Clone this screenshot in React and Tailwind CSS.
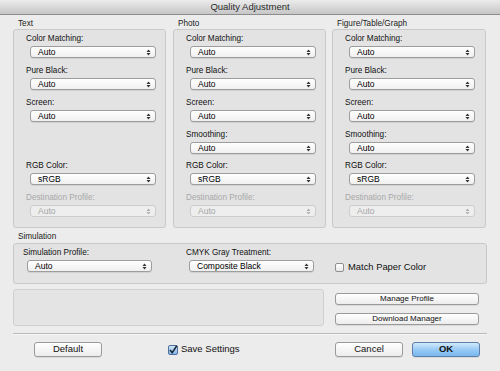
import { Fragment } from "react";

const Arrows = ({ disabled }) => (
  <svg width="5" height="7" viewBox="0 0 5 7" className="shrink-0">
    <path d="M0.5 3 L2.5 0.5 L4.5 3 Z" fill={disabled ? "#b0b0b0" : "#333"} />
    <path d="M0.5 4 L2.5 6.5 L4.5 4 Z" fill={disabled ? "#b0b0b0" : "#333"} />
  </svg>
);

const Select = ({ value, disabled, className = "" }) => (
  <div
    className={`h-[12px] flex items-center justify-between pl-[7px] pr-[4px] rounded-[3px] border text-[8.5px] leading-none ${
      disabled
        ? "border-[#cdcdcd] bg-[#eeeeee] text-[#a5a5a5]"
        : "border-[#9d9d9d] bg-gradient-to-b from-white to-[#f0f0f0] text-black shadow-[0_1px_0_rgba(0,0,0,0.08)]"
    } ${className}`}
  >
    <span>{value}</span>
    <Arrows disabled={disabled} />
  </div>
);

const Field = ({ label, value, disabled, h }) => (
  <div className={`${h} flex flex-col`}>
    <div
      className={`h-[10px] leading-[10px] text-[8.2px] pl-[12px] ${
        disabled ? "text-[#a8a8a8]" : "text-[#111]"
      }`}
    >
      {label}
    </div>
    <Select value={value} disabled={disabled} className="mt-[2px] ml-[16px] w-[126px]" />
  </div>
);

const columns = [
  { title: "Text", smoothing: false, w: "w-[153px]", ml: "" },
  { title: "Photo", smoothing: true, w: "w-[153px]", ml: "ml-[7px]" },
  { title: "Figure/Table/Graph", smoothing: true, w: "w-[154px]", ml: "ml-[6px]" },
];

const Button = ({ children, className = "", primary }) => (
  <div
    className={`flex items-center justify-center rounded-[3px] border ${
      primary
        ? "border-[#5b7eab] bg-gradient-to-b from-[#d3e9fc] via-[#98cbf5] to-[#79b8ef] text-[#111]"
        : "border-[#9a9a9a] bg-gradient-to-b from-white to-[#ececec] text-[#111]"
    } shadow-[0_1px_0_rgba(0,0,0,0.08)] ${className}`}
  >
    {children}
  </div>
);

export default function App() {
  return (
    <div
      className="w-[500px] h-[371px] bg-[#ececec] flex flex-col overflow-hidden"
      style={{ fontFamily: '"Liberation Sans", Arial, sans-serif' }}
    >
      {/* title bar */}
      <div className="h-[15px] shrink-0 flex items-center justify-center bg-gradient-to-b from-[#ececec] to-[#c6c6c6] border-b border-[#8c8c8c] text-[9.5px] text-[#2a2a2a]">
        Quality Adjustment
      </div>

      <div className="px-[13px] flex flex-col">
        {/* quality columns */}
        <div className="flex mt-[4px]">
          {columns.map((c) => (
            <div key={c.title} className={`${c.w} ${c.ml} flex flex-col`}>
              <div className="h-[10px] leading-[10px] text-[8.2px] pl-[5px] text-[#222]">
                {c.title}
              </div>
              <div className="h-[199px] rounded-[3px] border border-[#c9c9c9] bg-[#e3e3e3] pt-[4px] flex flex-col">
                <Field label="Color Matching:" value="Auto" h="h-[32px]" />
                <Field label="Pure Black:" value="Auto" h="h-[32px]" />
                <Field label="Screen:" value="Auto" h="h-[32px]" />
                {c.smoothing ? (
                  <Field label="Smoothing:" value="Auto" h="h-[31px]" />
                ) : (
                  <div className="h-[31px]" />
                )}
                <Field label="RGB Color:" value="sRGB" h="h-[32px]" />
                <Field label="Destination Profile:" value="Auto" disabled h="h-[24px]" />
              </div>
            </div>
          ))}
        </div>

        {/* simulation */}
        <div className="h-[11px] leading-[10px] mt-[4px] text-[8.2px] pl-[5px] text-[#222]">
          Simulation
        </div>
        <div className="h-[41px] rounded-[3px] border border-[#c9c9c9] bg-[#e3e3e3] flex pt-[4px]">
          <div className="flex flex-col w-[170px]">
            <div className="h-[10px] leading-[10px] text-[8.2px] pl-[9px] text-[#111]">
              Simulation Profile:
            </div>
            <Select value="Auto" className="mt-[2px] ml-[13px] w-[125px]" />
          </div>
          <div className="flex flex-col w-[136px]">
            <div className="h-[10px] leading-[10px] text-[8.2px] pl-[2px] text-[#111]">
              CMYK Gray Treatment:
            </div>
            <Select value="Composite Black" className="mt-[2px] ml-[5px] w-[125px]" />
          </div>
          <div className="flex items-center ml-[15px] mt-[14px] h-[10px]">
            <div className="w-[9px] h-[9px] rounded-[2px] border border-[#8f8f8f] bg-gradient-to-b from-white to-[#e8e8e8]" />
            <span className="ml-[4px] text-[9.4px] text-[#111]">Match Paper Color</span>
          </div>
        </div>

        {/* lower panel + profile buttons */}
        <div className="flex mt-[5px]">
          <div className="w-[311px] h-[37px] rounded-[3px] border border-[#d0d0d0] bg-[#e4e4e4]" />
          <div className="ml-[11px] flex flex-col pt-[4px]">
            <Button className="w-[144px] h-[12px] text-[8px]">Manage Profile</Button>
            <Button className="w-[144px] h-[12px] text-[8px] mt-[8px]">Download Manager</Button>
          </div>
        </div>

        {/* separator */}
        <div className="mt-[7px] h-[1px] bg-[#b9b9b9]" />
        <div className="h-[1px] bg-[#f6f6f6]" />

        {/* bottom buttons */}
        <div className="flex items-center mt-[7px] h-[15px]">
          <Button className="ml-[21px] w-[68px] h-[15px] text-[9.5px]">Default</Button>
          <div className="ml-[66px] flex items-center">
            <svg width="10" height="10" viewBox="0 0 10 10">
              <defs>
                <linearGradient id="cb" x1="0" y1="0" x2="0" y2="1">
                  <stop offset="0" stopColor="#d5e9fb" />
                  <stop offset="1" stopColor="#7fb6e8" />
                </linearGradient>
              </defs>
              <rect x="0.5" y="0.5" width="9" height="9" rx="1.5" fill="url(#cb)" stroke="#4d6f98" />
              <path d="M2 5 L4.2 7.6 L8.8 0.8" fill="none" stroke="#1c2a3a" strokeWidth="1.6" />
            </svg>
            <span className="ml-[3px] text-[9.5px] text-[#111]">Save Settings</span>
          </div>
          <Button className="ml-auto w-[68px] h-[15px] text-[9.5px]">Cancel</Button>
          <Button primary className="ml-[9px] mr-[7px] w-[68px] h-[15px] text-[9.5px] font-bold">
            OK
          </Button>
        </div>
      </div>
    </div>
  );
}
